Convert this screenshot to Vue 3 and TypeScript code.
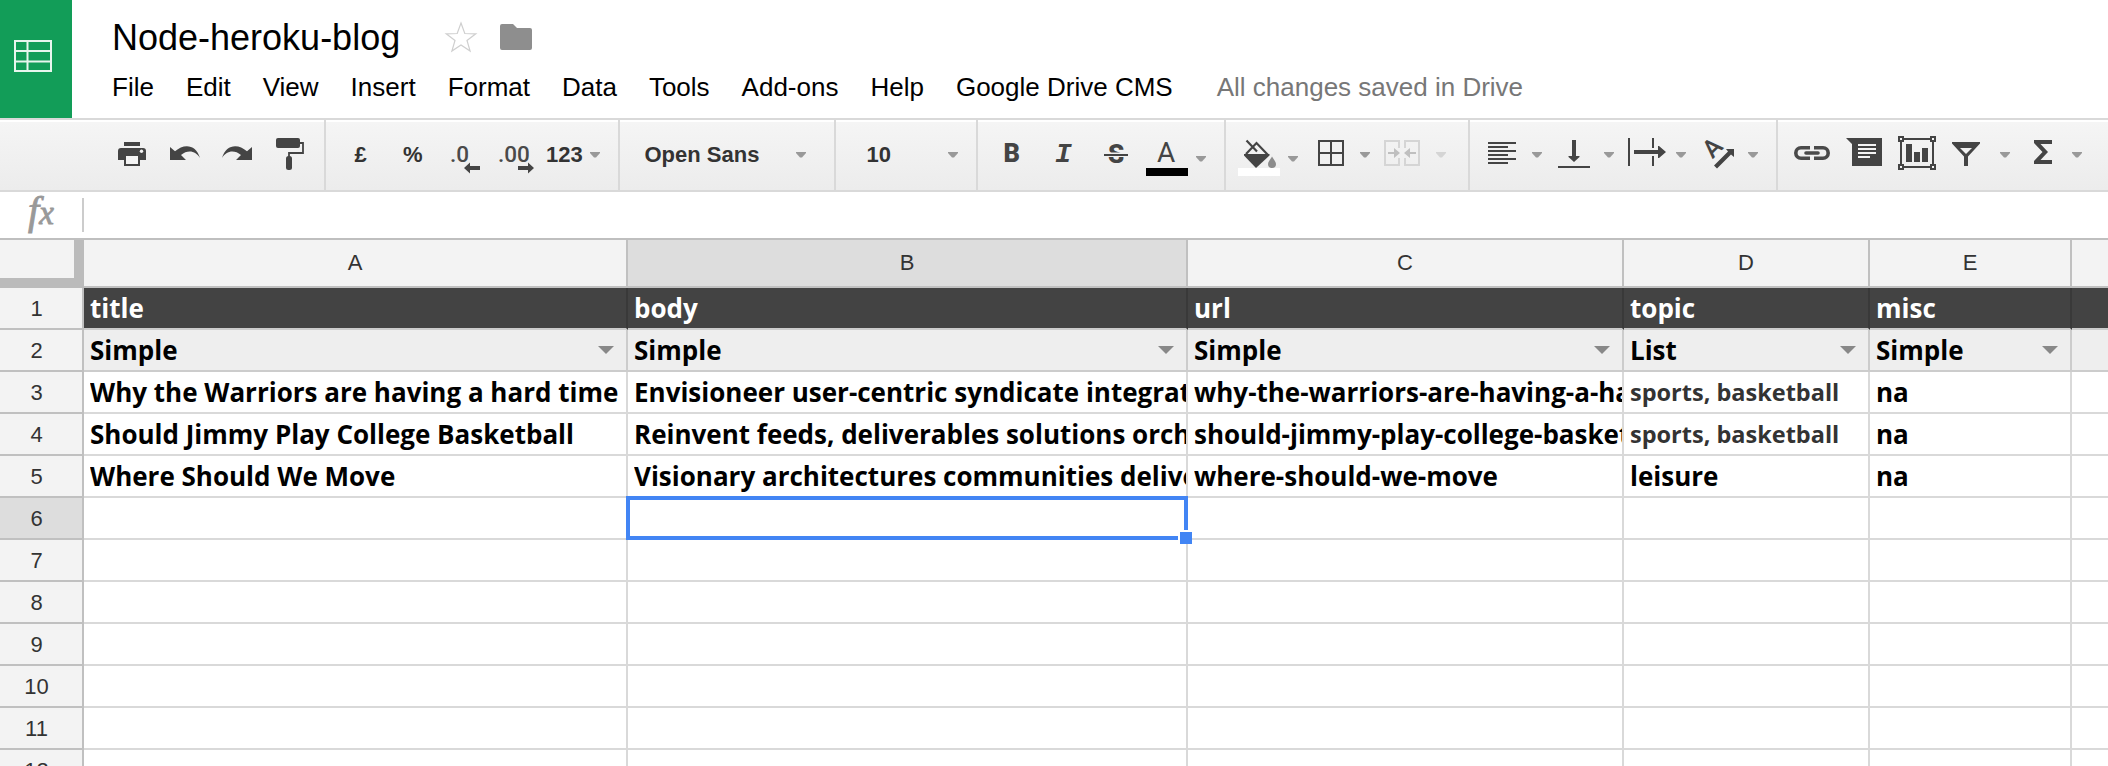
<script setup lang="ts">
interface Column {
  label: string
  width: number
}

interface Row {
  n: number
  cells: string[]
}

const menus: string[] = ['File', 'Edit', 'View', 'Insert', 'Format', 'Data', 'Tools', 'Add-ons', 'Help', 'Google Drive CMS']

const columns: Column[] = [
  { label: 'A', width: 544 },
  { label: 'B', width: 560 },
  { label: 'C', width: 436 },
  { label: 'D', width: 246 },
  { label: 'E', width: 202 },
  { label: '', width: 202 },
]

const content: string[][] = [
  ['title', 'body', 'url', 'topic', 'misc', ''],
  ['Simple', 'Simple', 'Simple', 'List', 'Simple', ''],
  ['Why the Warriors are having a hard time', 'Envisioneer user-centric syndicate integrat', 'why-the-warriors-are-having-a-ha', 'sports, basketball', 'na', ''],
  ['Should Jimmy Play College Basketball', 'Reinvent feeds, deliverables solutions orch', 'should-jimmy-play-college-basket', 'sports, basketball', 'na', ''],
  ['Where Should We Move', 'Visionary architectures communities delive', 'where-should-we-move', 'leisure', 'na', ''],
]

const rows: Row[] = Array.from({ length: 12 }, (_, i) => ({
  n: i + 1,
  cells: content[i] ?? columns.map(() => ''),
}))

const gridColumns = columns.map((c) => `${c.width}px`).join(' ')
const activeRow = 6
const activeColumn = 1
</script>

<template>
  <div class="app">
    <header class="header">
      <div class="logo">
        <svg width="72" height="118" viewBox="0 0 72 118">
          <path d="M15 41h36v30H15zM27.500 41v30M15 51h36M15 61.500h36" fill="none" stroke="#e8f6ee" stroke-width="2" />
        </svg>
      </div>
      <div class="heading">
        <div class="title-row">
          <h1>Node-heroku-blog</h1>
          <svg class="star" width="34" height="34" viewBox="444 19 34 34">
            <path d="M461 23l3.800 10.500 11 .3-8.800 6.700 3.100 10.600-9.100-6.200-9.100 6.200 3.100-10.600-8.800-6.700 11-.3z" fill="none" stroke="#cfcfcf" stroke-width="1.200" />
          </svg>
          <svg class="folder" width="32" height="26" viewBox="0 0 32 26">
            <path d="M2 0h11l4 4h13q2 0 2 2v18q0 2-2 2H2q-2 0-2-2V2q0-2 2-2z" fill="#8e8e8e" />
          </svg>
        </div>
        <nav class="menu">
          <span v-for="m in menus" :key="m">{{ m }}</span>
          <span class="saved">All changes saved in Drive</span>
        </nav>
      </div>
    </header>

    <div class="toolbar">
      <div class="group first">
        <svg width="40" height="70" viewBox="112 120 40 70">
          <path d="M124 142h16v4h-16zM121 148h22q3 0 3 3v9h-6v6h-16v-6h-6v-9q0-3 3-3z" />
          <path d="M126 156h12v8h-12z" fill="#f4f4f4" />
          <circle cx="141.500" cy="151.300" r="1.700" fill="#f4f4f4" />
        </svg>
        <svg width="60" height="70" viewBox="152 120 60 70">
          <path d="M170 147l5 4.300c9-8 21-7 25 6.700-4-7-12-9-19-3l5 5h-16z" />
        </svg>
        <svg width="52" height="70" viewBox="212 120 52 70">
          <path d="M252 147l-5 4.300c-9-8-21-7-25 6.700 4-7 12-9 19-3l-5 5h16z" />
        </svg>
        <svg width="60" height="70" viewBox="264 120 60 70">
          <rect x="276" y="138" width="24" height="10" rx="2" />
          <path d="M300 143h3v10h-14v4" fill="none" stroke="#444" stroke-width="1.800" />
          <rect x="286" y="156" width="6" height="14" rx="2.500" />
        </svg>
      </div>
      <div class="group">
        <svg width="64" height="70" viewBox="326 120 64 70"><text x="354.500" y="162" class="bold">£</text></svg>
        <svg width="50" height="70" viewBox="390 120 50 70"><text x="403" y="162" class="bold">%</text></svg>
        <svg width="50" height="70" viewBox="440 120 50 70">
          <text x="450" y="162" class="dec">.0</text>
          <path d="M464 168l6-5.500v3.500h10v4h-10v3.500z" />
        </svg>
        <svg width="50" height="70" viewBox="490 120 50 70">
          <text x="498" y="162" class="dec">.00</text>
          <path d="M534 168l-6-5.500v3.500h-10v4h10v3.500z" />
        </svg>
        <svg width="78" height="70" viewBox="540 120 78 70">
          <text x="546" y="162" class="bold">123</text>
          <path class="caret" d="M590 152h10v1l-4 4.500h-2l-4-4.500z" />
        </svg>
      </div>
      <div class="group">
        <svg width="214" height="70" viewBox="620 120 214 70">
          <text x="644.500" y="162" class="bold">Open Sans</text>
          <path class="caret" d="M796 152h10v1l-4 4.500h-2l-4-4.500z" />
        </svg>
      </div>
      <div class="group">
        <svg width="140" height="70" viewBox="836 120 140 70">
          <text x="866.500" y="162" class="bold">10</text>
          <path class="caret" d="M948 152h10v1l-4 4.500h-2l-4-4.500z" />
        </svg>
      </div>
      <div class="group">
        <svg width="60" height="70" viewBox="978 120 60 70"><text x="1003.500" y="162" class="b">B</text></svg>
        <svg width="54" height="70" viewBox="1038 120 54 70"><text x="1055" y="162" class="i">I</text></svg>
        <svg width="50" height="70" viewBox="1092 120 50 70">
          <text x="1108" y="163" class="s">S</text>
          <path d="M1104 152.500h24v4.500h-24z" fill="#f0f0f0" />
          <path d="M1104 154h24v2h-24z" />
        </svg>
        <svg width="82" height="70" viewBox="1142 120 82 70">
          <text x="1157" y="162" class="a">A</text>
          <path d="M1146 168h42v8h-42z" fill="#000" />
          <path class="caret" d="M1196 156h10v1l-4 4.500h-2l-4-4.500z" />
        </svg>
      </div>
      <div class="group">
        <svg width="78" height="70" viewBox="1226 120 78 70">
          <path d="M1246.500 140.500l10.500 11M1246 154l10.500-11 11.500 12" fill="none" stroke="#444" stroke-width="2.200" />
          <path d="M1244 154h25.500v1.500l-13.500 12.500-12-12.500z" />
          <path d="M1272 156.500c1.500 3 4 5 4 7.500a4 4 0 0 1-8 0c0-2.500 2.500-4.500 4-7.500z" fill="#8c8c8c" />
          <path d="M1238 168h42v8h-42z" fill="#fff" />
          <path class="caret" d="M1288 156h10v1l-4 4.500h-2l-4-4.500z" />
        </svg>
        <svg width="72" height="70" viewBox="1304 120 72 70">
          <path d="M1319 141h24v24h-24zM1331 141v24M1319 153h24" fill="none" stroke="#444" stroke-width="2" />
          <path class="caret" d="M1360 152h10v1l-4 4.500h-2l-4-4.500z" />
        </svg>
        <svg width="92" height="70" viewBox="1376 120 92 70">
          <path d="M1399 148v-7h-14v24h14v-7M1405 148v-7h14v24h-14v-7" fill="none" stroke="#d5d5d5" stroke-width="2" />
          <path d="M1388 152h6v-4l6 5-6 5v-4h-6zM1416 152h-6v-4l-6 5 6 5v-4h6z" fill="#bfbfbf" />
          <path d="M1436 152h10v1l-4 4.500h-2l-4-4.500z" fill="#d5d5d5" />
        </svg>
      </div>
      <div class="group">
        <svg width="78" height="70" viewBox="1470 120 78 70">
          <path d="M1488 142h28v2h-28zM1488 146h20v2h-20zM1488 150h28v2h-28zM1488 154h20v2h-20zM1488 158h28v2h-28zM1488 162h20v2h-20z" />
          <path class="caret" d="M1532 152h10v1l-4 4.500h-2l-4-4.500z" />
        </svg>
        <svg width="72" height="70" viewBox="1548 120 72 70">
          <path d="M1558 166h32v2h-32zM1572 140h4v16h3.500v1l-5.500 5-5.500-5v-1h3.500z" />
          <path class="caret" d="M1604 152h10v1l-4 4.500h-2l-4-4.500z" />
        </svg>
        <svg width="72" height="70" viewBox="1620 120 72 70">
          <path d="M1628 138h2v28h-2zM1652 138h2v10h-2zM1652 156h2v10h-2zM1634 150h24v-4h1l7 6-7 6h-1v-4h-24z" />
          <path class="caret" d="M1676 152h10v1l-4 4.500h-2l-4-4.500z" />
        </svg>
        <svg width="84" height="70" viewBox="1692 120 84 70">
          <text class="tilt" transform="translate(1712.500 159.500) rotate(-45)">A</text>
          <path d="M1714 165.500l14-14-2-2.500h8v8l-3-2.500-14 14z" />
          <path class="caret" d="M1748 152h10v1l-4 4.500h-2l-4-4.500z" />
        </svg>
      </div>
      <div class="group last">
        <svg width="60" height="70" viewBox="1778 120 60 70">
          <path d="M1810 147.800h-9a5.200 5.200 0 0 0 0 10.400h9M1814 147.800h9a5.200 5.200 0 0 1 0 10.400h-9" fill="none" stroke="#4a4a4a" stroke-width="3.600" />
          <path d="M1806 153h12" fill="none" stroke="#4a4a4a" stroke-width="3.600" stroke-linecap="round" />
        </svg>
        <svg width="52" height="70" viewBox="1838 120 52 70">
          <path d="M1846 138h36v28h-30v-22z" />
          <path d="M1858 144h18v2h-18zM1858 148h18v2h-18zM1858 152h18v2h-18zM1858 156h12v2h-12z" fill="#f4f4f4" />
        </svg>
        <svg width="54" height="70" viewBox="1890 120 54 70">
          <path d="M1901 139h32v28h-32z" fill="none" stroke="#444" stroke-width="2" />
          <path d="M1899 137h4v4h-4zM1931 137h4v4h-4zM1899 165h4v4h-4zM1931 165h4v4h-4z" fill="#f4f4f4" stroke="#444" stroke-width="2" />
          <path d="M1906 144h6v18h-6zM1914 152h6v10h-6zM1922 148h6v14h-6z" />
        </svg>
        <svg width="76" height="70" viewBox="1944 120 76 70">
          <path d="M1952 142h28v1.500l-12 13v9.500h-4v-9.500l-12-13z" />
          <path d="M1960 148h12l-6 6z" fill="#f2f2f2" />
          <path class="caret" d="M2000 152h10v1l-4 4.500h-2l-4-4.500z" />
        </svg>
        <svg width="88" height="70" viewBox="2020 120 88 70">
          <path d="M2034 140h18v4h-11.500l7.500 8-7.500 8h11.500v4h-18v-3l8.500-9-8.500-9z" />
          <path class="caret" d="M2072 152h10v1l-4 4.500h-2l-4-4.500z" />
        </svg>
      </div>
    </div>

    <div class="formula">
      <div class="fx"><span class="f">f</span><span class="x">x</span></div>
      <div class="divider"></div>
    </div>

    <div class="sheet">
      <div class="line head">
        <div class="corner"></div>
        <div class="cells" :style="{ gridTemplateColumns: gridColumns }">
          <div v-for="(c, i) in columns" :key="i" class="col-head" :class="{ active: i === activeColumn }">{{ c.label }}</div>
        </div>
      </div>
      <div v-for="r in rows" :key="r.n" class="line" :class="`row-${r.n}`">
        <div class="row-head" :class="{ active: r.n === activeRow }">{{ r.n }}</div>
        <div class="cells" :style="{ gridTemplateColumns: gridColumns }">
          <div v-for="(t, i) in r.cells" :key="i" class="cell" :class="{ small: t.startsWith('sports') }">
            <span class="text">{{ t }}</span>
            <svg v-if="r.n === 2 && t" class="drop" width="16" height="8" viewBox="0 0 16 8"><path d="M0 0h16l-8 8z" /></svg>
            <div v-if="r.n === activeRow && i === activeColumn" class="selection"><i class="handle"></i></div>
          </div>
        </div>
      </div>
    </div>
  </div>
</template>

<style>
html,
body {
  margin: 0;
  overflow: hidden;
}
</style>

<style scoped>
.app {
  width: 2108px;
  height: 766px;
  overflow: hidden;
  background: #fff;
  color: #000;
  font-family: 'Liberation Sans', Arial, sans-serif;
}
.header {
  display: flex;
  height: 118px;
  border-bottom: 2px solid #d9d9d9;
}
.logo {
  width: 72px;
  background: #129d58;
}
.logo svg {
  display: block;
}
.heading {
  padding-left: 40px;
}
.title-row {
  display: flex;
  height: 72px;
}
h1 {
  margin: 17px 44px 0 0;
  font-size: 36px;
  line-height: 42px;
  font-weight: 400;
  white-space: nowrap;
}
.star {
  margin: 19px 22px 0 0;
}
.folder {
  margin-top: 24px;
}
.menu {
  display: flex;
  gap: 32px;
  font-size: 26px;
  line-height: 30px;
  white-space: nowrap;
}
.saved {
  margin-left: 12px;
  color: #777;
}
.toolbar {
  display: flex;
  height: 70px;
  border-bottom: 2px solid #d9d9d9;
  background: linear-gradient(#fff 0 2px, #f5f5f5 2px, #ececec);
}
.group {
  display: flex;
  border-right: 2px solid #d9d9d9;
}
.first {
  padding-left: 112px;
}
.last {
  border-right: 0;
}
.group svg {
  display: block;
  fill: #444;
}
.group .caret {
  fill: #999;
}
.bold {
  font: bold 22px 'Liberation Sans', Arial, sans-serif;
  fill: #333;
}
.dec {
  font: 500 22.500px Roboto, sans-serif;
  fill: #4a4a4a;
}
.b {
  font: 900 25.500px Roboto, sans-serif;
}
.i {
  font: italic bold 28px 'Liberation Mono', monospace;
}
.s {
  font: 900 26px Roboto, sans-serif;
}
.a {
  font: 28px Roboto, sans-serif;
}
.tilt {
  font: 500 25px Roboto, sans-serif;
}
.formula {
  display: flex;
  height: 46px;
  border-bottom: 2px solid #bfbfbf;
}
.fx {
  width: 54px;
  padding-left: 28px;
  color: #999;
  font-family: 'Liberation Serif', serif;
  font-style: italic;
  line-height: 37px;
  white-space: nowrap;
  -webkit-text-stroke: 0.9px #999;
}
.f {
  font-size: 40px;
}
.x {
  font-size: 33px;
}
.divider {
  width: 2px;
  height: 34px;
  margin-top: 6px;
  background: #ccc;
}
.line {
  display: flex;
  height: 42px;
}
.head {
  height: 48px;
}
.corner {
  flex: none;
  box-sizing: border-box;
  width: 84px;
  background: #f3f3f3;
  border-right: 10px solid #bbb;
  border-bottom: 10px solid #bbb;
}
.cells {
  display: grid;
}
.col-head,
.row-head {
  box-sizing: border-box;
  background: #f3f3f3;
  border-right: 2px solid #c0c0c0;
  border-bottom: 2px solid #c0c0c0;
  color: #333;
  font-size: 22px;
  text-align: center;
}
.col-head {
  line-height: 45px;
}
.row-head {
  flex: none;
  width: 84px;
  padding-right: 9px;
  line-height: 41px;
}
.active {
  background: #ddd;
}
.cell {
  position: relative;
  box-sizing: border-box;
  display: flex;
  min-width: 0;
  padding-left: 6px;
  border-right: 2px solid #d9d9d9;
  border-bottom: 2px solid #d9d9d9;
  font-family: 'Open Sans', sans-serif;
  font-size: 26px;
  font-weight: 700;
  line-height: 41px;
}
.text {
  flex: 1;
  height: 40px;
  overflow: hidden;
  white-space: pre;
}
.small {
  color: #333;
  font-size: 23.500px;
}
.row-1 .cell {
  background: #434343;
  border-right-color: #393939;
  border-bottom-color: #ccc;
  color: #fff;
}
.row-2 .cell {
  background: #eee;
  border-color: #ccc;
}
.drop {
  flex: none;
  margin: 16px 12px 0 0;
  fill: #888;
}
.selection {
  position: absolute;
  z-index: 1;
  inset: -2px;
  border: 4px solid #4285f4;
}
.handle {
  position: absolute;
  right: -8px;
  bottom: -8px;
  width: 12px;
  height: 12px;
  border: solid #fff;
  border-width: 2px 0 0 2px;
  background: #4285f4;
}
</style>
